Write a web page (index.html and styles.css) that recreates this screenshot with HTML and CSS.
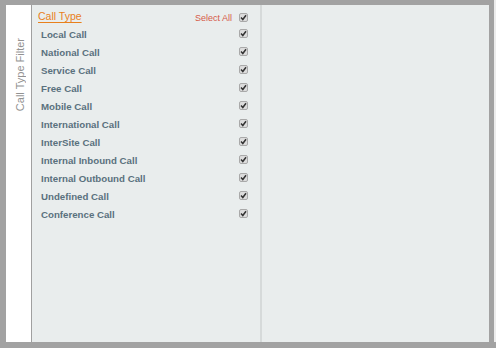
FILE: index.html
```html
<!DOCTYPE html>
<html>
<head>
<meta charset="utf-8">
<link rel="stylesheet" href="styles.css">
</head>
<body>
<div class="frame">
  <div class="inner">
    <div class="tab"><span class="tab-label">Call Type Filter</span></div>
    <div class="panel">
      <div class="head">
        <a class="title">Call Type</a>
        <div class="select-all"><span>Select All</span><span class="cb"><svg viewBox="0 0 7 7" width="7" height="7"><path d="M1 3.6 L2.8 5.5 L6 1.2" fill="none" stroke="#333" stroke-width="1.5"/></svg></span></div>
      </div>
      <ul class="list">
        <li><span>Local Call</span><span class="cb"><svg viewBox="0 0 7 7" width="7" height="7"><path d="M1 3.6 L2.8 5.5 L6 1.2" fill="none" stroke="#333" stroke-width="1.5"/></svg></span></li>
        <li><span>National Call</span><span class="cb"><svg viewBox="0 0 7 7" width="7" height="7"><path d="M1 3.6 L2.8 5.5 L6 1.2" fill="none" stroke="#333" stroke-width="1.5"/></svg></span></li>
        <li><span>Service Call</span><span class="cb"><svg viewBox="0 0 7 7" width="7" height="7"><path d="M1 3.6 L2.8 5.5 L6 1.2" fill="none" stroke="#333" stroke-width="1.5"/></svg></span></li>
        <li><span>Free Call</span><span class="cb"><svg viewBox="0 0 7 7" width="7" height="7"><path d="M1 3.6 L2.8 5.5 L6 1.2" fill="none" stroke="#333" stroke-width="1.5"/></svg></span></li>
        <li><span>Mobile Call</span><span class="cb"><svg viewBox="0 0 7 7" width="7" height="7"><path d="M1 3.6 L2.8 5.5 L6 1.2" fill="none" stroke="#333" stroke-width="1.5"/></svg></span></li>
        <li><span>International Call</span><span class="cb"><svg viewBox="0 0 7 7" width="7" height="7"><path d="M1 3.6 L2.8 5.5 L6 1.2" fill="none" stroke="#333" stroke-width="1.5"/></svg></span></li>
        <li><span>InterSite Call</span><span class="cb"><svg viewBox="0 0 7 7" width="7" height="7"><path d="M1 3.6 L2.8 5.5 L6 1.2" fill="none" stroke="#333" stroke-width="1.5"/></svg></span></li>
        <li><span>Internal Inbound Call</span><span class="cb"><svg viewBox="0 0 7 7" width="7" height="7"><path d="M1 3.6 L2.8 5.5 L6 1.2" fill="none" stroke="#333" stroke-width="1.5"/></svg></span></li>
        <li><span>Internal Outbound Call</span><span class="cb"><svg viewBox="0 0 7 7" width="7" height="7"><path d="M1 3.6 L2.8 5.5 L6 1.2" fill="none" stroke="#333" stroke-width="1.5"/></svg></span></li>
        <li><span>Undefined Call</span><span class="cb"><svg viewBox="0 0 7 7" width="7" height="7"><path d="M1 3.6 L2.8 5.5 L6 1.2" fill="none" stroke="#333" stroke-width="1.5"/></svg></span></li>
        <li><span>Conference Call</span><span class="cb"><svg viewBox="0 0 7 7" width="7" height="7"><path d="M1 3.6 L2.8 5.5 L6 1.2" fill="none" stroke="#333" stroke-width="1.5"/></svg></span></li>
      </ul>
    </div>
    <div class="divider"></div>
    <div class="right"></div>
  </div>
</div>
</body>
</html>
```
FILE: styles.css
```css
html, body {
  margin: 0;
  padding: 0;
}
body {
  width: 496px;
  height: 348px;
  background: #a2a2a2;
  font-family: "Liberation Sans", Arial, sans-serif;
  overflow: hidden;
}
.frame {
  box-sizing: border-box;
  height: 342px;
  padding: 5px 5px 0 6px;
  border-left: 1px solid #bdbdbd;
  border-right: 2px solid #ececec;
  margin-left: -1px;
  width: 497px;
}
.inner {
  display: flex;
  height: 337px;
}
.tab {
  box-sizing: border-box;
  width: 26px;
  background: #fff;
  border-right: 1px solid #a0a0a0;
  display: flex;
  justify-content: center;
  padding-top: 33px;
  padding-left: 2px;
}
.tab-label {
  writing-mode: vertical-rl;
  transform: rotate(180deg);
  font-size: 11px;
  color: #929292;
  line-height: 12px;
  align-self: flex-start;
}
.panel {
  width: 228px;
  background: #e9eded;
  padding: 2px 12px 0 6px;
  box-sizing: border-box;
}
.head {
  display: flex;
  align-items: center;
  justify-content: space-between;
  height: 18px;
}
.title {
  font-size: 10.5px;
  color: #e8801c;
  text-decoration: underline;
  text-underline-offset: 2px;
}
.select-all {
  display: flex;
  align-items: center;
  gap: 7px;
  font-size: 9px;
  color: #d65b48;
  margin-top: 3px;
}
.list {
  list-style: none;
  margin: 0;
  padding: 0 0 0 3px;
}
.list li {
  display: flex;
  align-items: center;
  justify-content: space-between;
  height: 18px;
  font-size: 9.7px;
  font-weight: bold;
  color: #5a717e;
}
.list li .cb {
  margin-top: -2px;
}
.cb {
  box-sizing: border-box;
  width: 9px;
  height: 9px;
  border: 1px solid #a9a9a9;
  border-radius: 2px;
  background: #dcdcdc;
  display: flex;
  align-items: center;
  justify-content: center;
}
.cb svg {
  display: block;
}
.divider {
  width: 2px;
  background: #d6dada;
}
.right {
  width: 227px;
  background: #e9eded;
}
```
